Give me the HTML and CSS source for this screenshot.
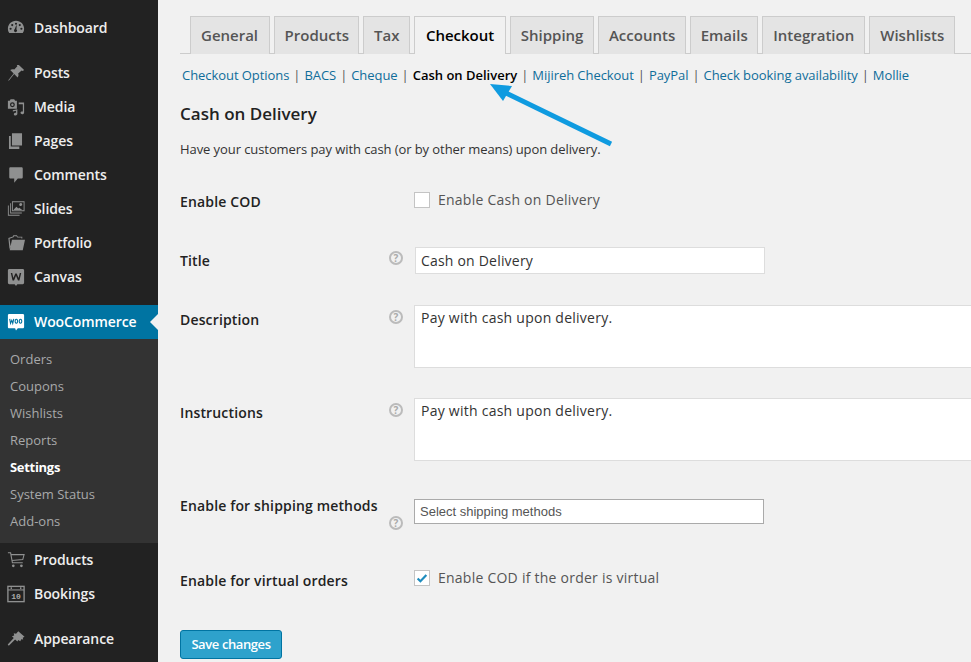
FILE: index.html
```html
<!DOCTYPE html>
<html lang="en">
<head>
<meta charset="utf-8">
<title>WooCommerce Settings</title>
<link rel="stylesheet" href="styles.css">
</head>
<body>
<div class="page">
  <nav class="sidebar">
    <a class="item gap-after"><svg class="icon" viewBox="0 0 20 20"><path d="M10 2C4.800 2 1 6.100 1 10.800c0 2 .6 3.500 1.500 4.700h15c.9-1.200 1.500-2.700 1.500-4.700C19 6.100 15.200 2 10 2zM4 12a1.200 1.200 0 1 1 0-2.400A1.200 1.200 0 0 1 4 12zm1.800-4a1.200 1.200 0 1 1 0-2.400 1.200 1.200 0 0 1 0 2.400zM10 6.500a1.200 1.200 0 1 1 0-2.400 1.200 1.200 0 0 1 0 2.400zm1.200 6.300a1.700 1.700 0 1 1-2.700-1.300l1.800-4.500.5.100-.3 4.600c.4.200.7.600.7 1.100zM14.200 8a1.200 1.200 0 1 1 0-2.400 1.200 1.200 0 0 1 0 2.400zm1.800 4a1.200 1.200 0 1 1 0-2.400 1.200 1.200 0 0 1 0 2.400z" fill-rule="evenodd"/></svg><span>Dashboard</span></a>
    <a class="item"><svg class="icon" viewBox="0 0 20 20"><path d="M13.200 1l5.800 5.800-1.500 1-1.300-.7-3.800 3.400c.7 1.600.4 3.300-.6 4.400L8 11.100l-6 7.400-.6-.5L7.400 10.500 3.600 6.800c1.200-1 2.900-1.300 4.500-.6l3.400-3.800-.6-1.200z"/></svg><span>Posts</span></a>
    <a class="item"><svg class="icon" viewBox="0 0 20 20"><path d="M1 3h2l1-1.500h4L9 3h2v9H1V3zm5 1.800a2.700 2.700 0 1 0 0 5.400 2.700 2.700 0 0 0 0-5.400zm0 1.400a1.300 1.300 0 1 1 0 2.600 1.300 1.300 0 0 1 0-2.600zM13 5h6v11.300c0 1-.9 1.700-2 1.700s-2-.6-2-1.500.9-1.500 2-1.500h.6V7h-4.600V5zM6.500 13.500l5-1v5.300c0 .9-.9 1.600-2 1.600s-1.900-.6-1.900-1.400.9-1.500 2-1.500h.5v-2.300l-3.600.7v-1.400z" fill-rule="evenodd"/></svg><span>Media</span></a>
    <a class="item"><svg class="icon" viewBox="0 0 20 20"><path d="M5.500 1.500h11.200v13.500H5.500zM2.200 4.500h2v11.700h9.500V19H2.200z"/></svg><span>Pages</span></a>
    <a class="item"><svg class="icon" viewBox="0 0 20 20"><path d="M4 1.500h12c.9 0 1.500.6 1.500 1.500v9.500c0 .9-.6 1.500-1.500 1.500h-4l-4 4.500V14H4c-.9 0-1.500-.6-1.500-1.500V3c0-.9.6-1.500 1.500-1.500z"/></svg><span>Comments</span></a>
    <a class="item"><svg class="icon" viewBox="0 0 20 20"><path d="M5.500 1.500h14v11h-14v-11zm1 1v9h12v-9h-12zM3.500 3.500h1v10.500h12v1h-13V3.500zM1 6h1v10.500h12v1H1V6zM7.500 10.500l3-3 2 2 1-1 3.500 2.500H7.500zM14.500 3.500a1.500 1.500 0 1 1 1.500 3 1.500 1.500 0 0 1-1.500-3z" fill-rule="evenodd"/></svg><span>Slides</span></a>
    <a class="item"><svg class="icon icon-lg" viewBox="0 0 20 20"><path d="M1.500 4.500l5-1.800.5-1.200h4l1 1.500h5v2h-1V3.800h-4.500l-1-1.300H7.800l-.5 1.100L2.800 5.200 4 14l-1.200 3zM5.500 6.500H20L17.500 18H3z"/></svg><span>Portfolio</span></a>
    <a class="item gap-after"><svg class="icon" viewBox="0 0 20 20"><path d="M2.500 1h15c.8 0 1.500.7 1.500 1.500v14c0 .8-.7 1.500-1.500 1.500h-6l-1.500 2-1.500-2h-6C1.700 18 1 17.300 1 16.500v-14C1 1.700 1.700 1 2.500 1zm1.700 4.500l2 8.500h1.600l2.200-5.500 2.200 5.500h1.600l2-8.500h-1.600l-1.300 5.700-2.100-5.200H9.200l-2.100 5.200-1.300-5.700H4.200z" fill-rule="evenodd"/></svg><span>Canvas</span></a>
    <a class="item current"><svg class="icon woo" viewBox="0 0 20 20"><path class="woo-bg" d="M2.500 1h15c1 0 1.500.7 1.500 1.500v13c0 1-.7 1.500-1.500 1.500H12l-2 2.500L9 17H2.500C1.500 17 1 16.300 1 15.500v-13C1 1.700 1.500 1 2.500 1z"/><path class="woo-ink" d="M3 6.500l.9 5 1.400-3.400 1.100 3.400 1.100-5M10.400 7a1.400 2.200 0 1 0 .01 0zM15 7a1.400 2.200 0 1 0 .01 0z"/></svg><span>WooCommerce</span></a>
    <div class="submenu">
      <a class="subitem">Orders</a>
      <a class="subitem">Coupons</a>
      <a class="subitem">Wishlists</a>
      <a class="subitem">Reports</a>
      <a class="subitem active">Settings</a>
      <a class="subitem">System Status</a>
      <a class="subitem">Add-ons</a>
    </div>
    <a class="item"><svg class="icon" viewBox="0 0 20 20"><path class="line" d="M1 2h3l2 11h11.500M3.800 4H19l-1.500 5.500-12 1"/><circle cx="7" cy="16.500" r="1.500"/><circle cx="16" cy="16.500" r="1.500"/></svg><span>Products</span></a>
    <a class="item gap-after"><svg class="icon" viewBox="0 0 20 20"><rect class="line line-thick" x="1" y="1.500" width="18" height="17"/><path class="line" d="M1 5.500h18"/><path d="M4 2.500h1.500v2H4zM14.500 2.500H16v2h-1.500z"/><text class="cal" x="10" y="15.500" text-anchor="middle">10</text></svg><span>Bookings</span></a>
    <a class="item"><svg class="icon" viewBox="0 0 20 20"><path d="M12.500 1.500l7 6-2 1 .5 2-2.200-.2-1 2.200-2.300-1.500-.9 1.800-2.600-2.200L2 17.500.8 16.200 7.500 9 5.500 7l2.500-1-.5-2.400 2.600.5z"/></svg><span>Appearance</span></a>
  </nav>

  <main class="content">
    <div class="tabs">
      <a class="tab tab-first">General</a>
      <a class="tab">Products</a>
      <a class="tab">Tax</a>
      <a class="tab tab-active">Checkout</a>
      <a class="tab">Shipping</a>
      <a class="tab tab-wide">Accounts</a>
      <a class="tab">Emails</a>
      <a class="tab tab-wide">Integration</a>
      <a class="tab tab-wide">Wishlists</a>
    </div>
    <div class="sublinks">
      <a>Checkout Options</a><i>|</i><a>BACS</a><i>|</i><a>Cheque</a><i>|</i><a class="on">Cash on Delivery</a><i>|</i><a>Mijireh Checkout</a><i>|</i><a>PayPal</a><i>|</i><a>Check booking availability</a><i>|</i><a>Mollie</a>
    </div>
    <h2 class="heading">Cash on Delivery</h2>
    <p class="intro">Have your customers pay with cash (or by other means) upon delivery.</p>

    <div class="form">
      <div class="row row-cod">
        <label class="label">Enable COD</label>
        <span class="tip-slot"></span>
        <label class="check"><span class="box"></span>Enable Cash on Delivery</label>
      </div>
      <div class="row row-title">
        <label class="label">Title</label>
        <span class="tip-slot"><span class="tip">?</span></span>
        <input class="input" type="text" value="Cash on Delivery">
      </div>
      <div class="row row-area">
        <label class="label">Description</label>
        <span class="tip-slot"><span class="tip">?</span></span>
        <textarea class="area">Pay with cash upon delivery.</textarea>
      </div>
      <div class="row row-area">
        <label class="label">Instructions</label>
        <span class="tip-slot"><span class="tip">?</span></span>
        <textarea class="area">Pay with cash upon delivery.</textarea>
      </div>
      <div class="row row-ship">
        <label class="label">Enable for shipping methods</label>
        <span class="tip-slot tip-low"><span class="tip">?</span></span>
        <div class="select">Select shipping methods</div>
      </div>
      <div class="row row-virtual">
        <label class="label">Enable for virtual orders</label>
        <span class="tip-slot"></span>
        <label class="check"><span class="box"><svg class="tick" viewBox="0 0 16 16"><path d="M3 8.500l3.200 3.200L13 4.500"/></svg></span>Enable COD if the order is virtual</label>
      </div>
    </div>
    <button class="save" type="button">Save changes</button>

    <svg class="arrow" viewBox="0 0 140 70" width="140" height="70"><path class="arrow-head" d="M10 3l22 2-9 15z"/><path class="arrow-line" d="M22 10l109 53"/></svg>
  </main>
</div>
</body>
</html>
```
FILE: styles.css
```css
* { box-sizing: border-box; }
html, body { margin: 0; height: 100%; overflow: hidden; }
body { background: #f1f1f1; font-family: "Open Sans", "Noto Sans", sans-serif; color: #333; }
.page { display: flex; width: 971px; height: 662px; overflow: hidden; }

.sidebar { flex: 0 0 158px; height: 662px; background: #222; padding-top: 11px; display: flex; flex-direction: column; }
.item { display: flex; align-items: center; flex: 0 0 34px; padding-left: 7px; gap: 9px; color: #eee; font-size: 14px; font-weight: 600; letter-spacing: -.1px; position: relative; }
.item span { margin-bottom: 2px; }
.gap-after { margin-bottom: 11px; }
.icon { flex: 0 0 18px; width: 18px; height: 18px; fill: #8f9090; }
.icon-lg { flex-basis: 20px; width: 20px; margin: 0 -1px; }
.line { fill: none; stroke: #8f9090; stroke-width: 1.200; }
.line-thick { stroke-width: 1.500; }
.cal { font-family: "Liberation Mono", monospace; font-size: 9px; fill: #aaa; }
.current { background: #0074a2; color: #fff; }
.current::after { content: ""; position: absolute; right: 0; top: 9px; border: 8px solid transparent; border-right-color: #f1f1f1; border-left-width: 0; }
.woo-bg { fill: #fff; }
.woo-ink { fill: none; stroke: #0074a2; stroke-width: 1.200; }
.submenu { background: #333; padding: 7px 0 8px; display: flex; flex-direction: column; }
.subitem { height: 27px; line-height: 27px; padding-left: 10px; font-size: 13px; color: #a8a9aa; }
.subitem.active { color: #fff; font-weight: 700; letter-spacing: -.3px; }

.content { flex: 1 1 auto; min-width: 0; padding-left: 22px; position: relative; }
.tabs { display: flex; gap: 4px; height: 54px; padding: 16px 0 0 10px; border-bottom: 1px solid #ccc; }
.tab { height: 38px; padding: 0 9.500px; line-height: 37px; font-size: 15px; font-weight: 600; color: #555; background: #e4e4e4; border: 1px solid #ccc; border-bottom: 0; }
.tab-first { padding: 0 11px 0 10px; }
.tab-wide { padding: 0 10px; }
.tab-active { background: #f1f1f1; color: #000; height: 38px; margin-bottom: -1px; padding: 0 11px; }
.sublinks { padding: 12px 0 0 2px; font-size: 13px; line-height: 18px; height: 30px; white-space: nowrap; letter-spacing: -.06px; }
.sublinks a { color: #0f6d9a; }
.sublinks a.on { color: #000; font-weight: 600; letter-spacing: 0; }
.sublinks i { font-style: normal; color: #555; margin: 0 4px; }
.heading { margin: 0; padding-top: 17px; font-size: 17px; line-height: 25px; font-weight: 600; color: #222; }
.intro { margin: 13px 0 0; font-size: 13px; line-height: 20px; color: #333; letter-spacing: -.08px; }

.row { display: grid; grid-template-columns: 209px 25px 1fr; align-items: start; }
.label { font-size: 14px; font-weight: 600; color: #222; line-height: 20px; white-space: nowrap; letter-spacing: .15px; }
.tip-slot { display: block; }
.tip { display: block; width: 14px; height: 14px; border: 2px solid #bbb; border-radius: 50%; color: #aaa; font-size: 10px; font-weight: 700; line-height: 10px; text-align: center; }
.check { display: flex; align-items: center; gap: 8px; font-size: 14px; line-height: 20px; color: #555; letter-spacing: .24px; }
.box { width: 16px; height: 16px; background: #fff; border: 1px solid #c4c4c4; flex: none; display: block; }
.tick { display: block; width: 14px; height: 14px; fill: none; stroke: #1e8cbe; stroke-width: 2.500; }
.input { width: 350px; height: 27px; margin: 0 0 0 1px; padding: 0 5px; border: 1px solid #ddd; background: #fff; font: 14px "Open Sans", sans-serif; letter-spacing: .2px; color: #333; outline: 0; }
.area { display: block; width: 600px; height: 63px; padding: 2px 6px; border: 1px solid #ddd; background: #fff; font: 14px/20px "Open Sans", sans-serif; letter-spacing: .25px; color: #333; resize: none; outline: 0; }
.select { width: 350px; height: 25px; padding-left: 5px; border: 1px solid #aaa; background: #fff; font: 13px/23px "Liberation Sans", sans-serif; color: #555; }

.row-cod { height: 88px; padding-top: 33px; }
.row-cod .check { margin-top: -2px; }
.row-title { height: 58px; }
.row-title .label { padding-top: 4px; }
.row-title .tip { margin-top: 4px; }
.row-area { height: 93px; }
.row-area .label { padding-top: 5px; }
.row-area .tip { margin-top: 5px; }
.row-ship { height: 80px; padding-top: 8px; }
.row-ship .label { margin-top: -3px; }
.row-ship .tip { margin-top: 2px; }
.tip-low { padding-top: 15px; }
.row-virtual { height: 59px; }
.row-virtual .check { margin-top: -3px; }

.save { display: block; width: 102px; height: 29px; padding: 0 0 2px; background: #2ea2cc; border: 1px solid #0074a2; border-radius: 3px; color: #fff; font: 600 13px "Open Sans", sans-serif; letter-spacing: -.4px; }
.arrow { position: absolute; left: 322px; top: 81px; }
.arrow-head { fill: #0f9be0; }
.arrow-line { fill: none; stroke: #0f9be0; stroke-width: 5; }
```
